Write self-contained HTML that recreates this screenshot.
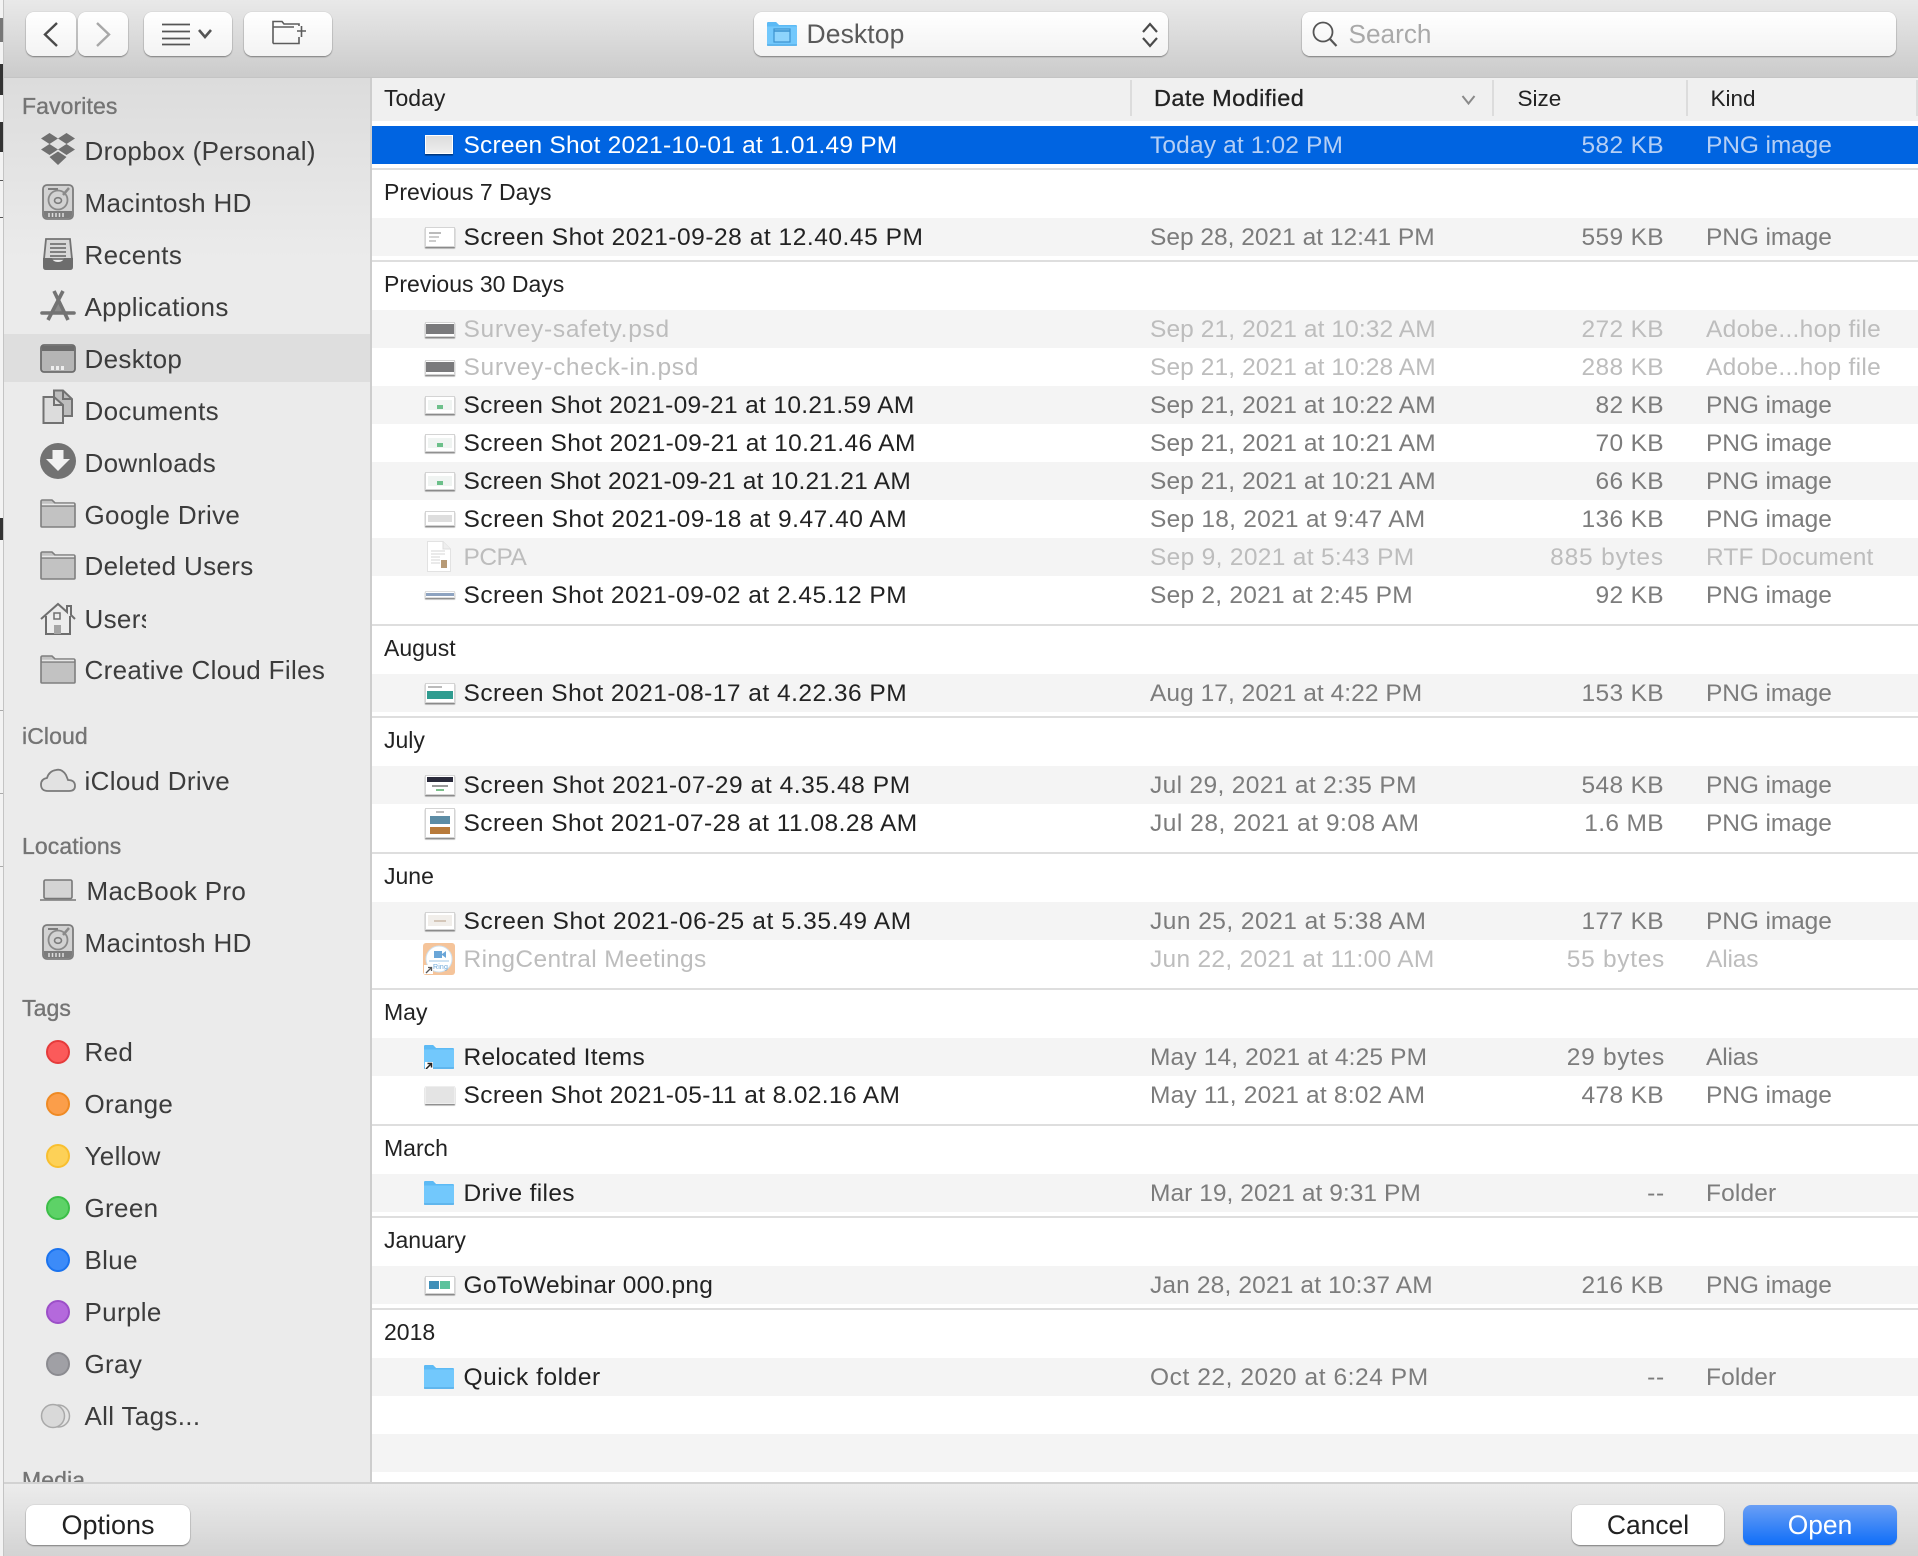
<!DOCTYPE html>
<html><head><meta charset="utf-8"><style>
html,body{margin:0;padding:0}
body{width:1918px;height:1556px;position:relative;overflow:hidden;background:#fff;font-family:"Liberation Sans",sans-serif;color:#222}
.a{position:absolute}
#top{left:0;top:0;width:1918px;height:77px;background:linear-gradient(#e9e9e9,#cbcbcb)}
#side{left:4px;top:78px;width:366px;height:1404px;background:linear-gradient(#dcdcdc,#ebebeb 180px);overflow:hidden}
#sdiv{left:370px;top:78px;width:2px;height:1404px;background:#cdcdcd}
#bot{left:4px;top:1484px;width:1914px;height:72px;background:linear-gradient(#ececec,#d3d3d3)}
#botl{left:4px;top:1482px;width:1914px;height:2px;background:#d2d2d2}
#hdr{left:372px;top:78px;width:1546px;height:43px;background:#f0f0f0;border-bottom:2px solid #d4d4d4}
.sep{position:absolute;top:80px;width:2px;height:36px;background:#dcdcdc}
.btn{position:absolute;background:linear-gradient(#fff,#f3f3f3);border-radius:8px;box-shadow:0 1px 1.5px rgba(0,0,0,.4),0 0 1px rgba(0,0,0,.2)}
.bb{position:absolute;background:#fff;border-radius:8px;box-shadow:0 1px 1.5px rgba(0,0,0,.4),0 0 1px rgba(0,0,0,.25);font-size:26.4px;line-height:40px;text-align:center;color:#222}
.si{position:absolute;left:80.5px;font-size:26px;letter-spacing:.33px;line-height:40px;height:40px;color:#3c3c3c;white-space:nowrap}
.st{position:absolute;left:18px;font-size:23px;letter-spacing:.1px;line-height:30px;color:#747474;-webkit-text-stroke:.35px #747474;white-space:nowrap}
.ic{position:absolute;overflow:visible}
.tag{position:absolute;left:42px;width:20px;height:20px;border-radius:50%;border-width:2px;border-style:solid}
.r{position:absolute;left:372px;width:1546px;height:38px;font-size:24.5px;letter-spacing:.15px;line-height:38px;white-space:nowrap}
.z{background:#f4f4f4}
.r span{position:absolute;top:1px}
.n{left:91.5px;color:#222}
.d{left:778px;color:#7c7c7c}
.s{right:254px;color:#7c7c7c;letter-spacing:.35px}
.k{left:1334px;color:#7c7c7c;letter-spacing:-.1px}
.off .n,.off .d,.off .s,.off .k{color:#bdbdbd}
.sel{background:#0064e1}
.sel .n{color:#fff}
.sel .d,.sel .s,.sel .k{color:#b5cff5}
.g{position:absolute;left:384px;font-size:23px;line-height:30px;color:#222;white-space:nowrap}
.l{position:absolute;left:372px;width:1546px;height:2px;background:#dedede}
.t{position:absolute;left:52.5px;width:28px;background:#fff;border:1px solid #d4d4d4;box-shadow:0 1.5px 1px rgba(0,0,0,.45);box-sizing:content-box;overflow:hidden}
.t i{position:absolute;display:block}
.f{position:absolute;left:52px}
</style></head><body>
<svg width="0" height="0" style="position:absolute"><defs>
<symbol id="gf" viewBox="0 0 36 29"><path d="M1 27V2.5Q1 1 2.5 1H12L15 4H33.5Q35 4 35 5.5V27Q35 28 34 28H2Q1 28 1 27Z" fill="#c2c2c2" stroke="#7f7f7f" stroke-width="1.6"/><path d="M1.5 7H34.5" stroke="#7f7f7f" stroke-width="1.6"/><path d="M2 5.500H34" stroke="#e8e8e8" stroke-width="1.5"/></symbol>
<symbol id="bf" viewBox="0 0 30 24"><path d="M0 22.500V1.500Q0 0 1.500 0H9L12 3H28.500Q30 3 30 4.500V22.500Q30 24 28.500 24H1.500Q0 24 0 22.500Z" fill="#72c8fc"/><path d="M0 4.500V1.500Q0 0 1.500 0H9L12 3H28.500Q30 3 30 4.500Z" fill="#5cbaf5"/><path d="M0 23H30" stroke="#5ab0e8" stroke-width="1.500"/></symbol>
<symbol id="hd" viewBox="0 0 32 36"><rect x="1" y="1" width="30" height="34" rx="4" fill="#d2d2d2" stroke="#7c7c7c" stroke-width="1.800"/><path d="M2 27H30V31Q30 34 27 34H5Q2 34 2 31Z" fill="#7c7c7c"/><path d="M7 29V33M10.500 29V33M14 29V33M17.500 29V33M21 29V33" stroke="#ddd" stroke-width="1.500"/><path d="M6 5H16" stroke="#7c7c7c" stroke-width="2"/><circle cx="16" cy="16" r="9.500" fill="none" stroke="#8a8a8a" stroke-width="1.800"/><ellipse cx="16" cy="16.500" rx="3.500" ry="2.800" fill="none" stroke="#7c7c7c" stroke-width="1.600"/><path d="M21 11L27 4" stroke="#8a8a8a" stroke-width="2.500"/></symbol>
</defs></svg>

<!-- background window sliver -->
<div class="a" style="left:0;top:0;width:4px;height:1556px;background:#f3f3f3"></div>
<div class="a" style="left:0;top:18px;width:3px;height:24px;background:#777"></div>
<div class="a" style="left:0;top:64px;width:3px;height:31px;background:#333"></div>
<div class="a" style="left:0;top:122px;width:3px;height:30px;background:#333"></div>
<div class="a" style="left:0;top:180px;width:3px;height:1px;background:#555"></div>
<div class="a" style="left:0;top:217px;width:3px;height:1px;background:#555"></div>
<div class="a" style="left:0;top:518px;width:3px;height:22px;background:#333"></div>
<div class="a" style="left:0;top:710px;width:3px;height:1px;background:#aaa"></div>
<div class="a" style="left:0;top:793px;width:3px;height:1px;background:#aaa"></div>
<div class="a" style="left:0;top:866px;width:3px;height:1px;background:#aaa"></div>
<div class="a" style="left:3px;top:0;width:1px;height:1556px;background:#c4c4c4"></div>

<div id="top" class="a" style="left:4px;width:1914px"></div>
<div class="a" style="left:4px;top:77px;width:1914px;height:1px;background:#c4c4c4"></div>

<div class="btn" style="left:26px;top:12px;width:50px;height:44px"></div>
<div class="btn" style="left:78px;top:12px;width:50px;height:44px"></div>
<div class="btn" style="left:144px;top:12px;width:88px;height:44px"></div>
<div class="btn" style="left:244px;top:12px;width:88px;height:44px"></div>
<svg class="ic" style="left:26px;top:12px" width="50" height="44"><path d="M31 11L19 22.500L31 34" fill="none" stroke="#4a4a4a" stroke-width="2.400"/></svg>
<svg class="ic" style="left:78px;top:12px" width="50" height="44"><path d="M19 11L31 22.500L19 34" fill="none" stroke="#a8a8a8" stroke-width="2.400"/></svg>
<svg class="ic" style="left:144px;top:12px" width="88" height="44"><path d="M18 12.500H46M18 19.500H46M18 26.500H46M18 32.500H46" stroke="#555" stroke-width="1.800"/><path d="M55 18L61 25L67 18" fill="none" stroke="#555" stroke-width="2.600"/></svg>
<svg class="ic" style="left:244px;top:12px" width="88" height="44"><path d="M29 31.500H55V25M29 31.500V9.500H38L40 12H55V14M29 15H50" fill="none" stroke="#5c5c5c" stroke-width="1.600"/><path d="M53 19H62M57.500 14V25" stroke="#5c5c5c" stroke-width="1.600"/></svg>

<div class="btn" style="left:754px;top:12px;width:414px;height:44px"></div>
<svg class="ic" style="left:767px;top:22px" width="30" height="24" viewBox="0 0 30 24"><use href="#bf"/><rect x="7" y="7" width="16" height="13" fill="#8ed4fc" stroke="#3c93cf" stroke-width="1.200"/><path d="M7 9H23" stroke="#3c93cf" stroke-width="1.500"/></svg>
<div class="a" style="left:806.500px;top:12px;font-size:26.500px;line-height:44px;letter-spacing:.1px;color:#5a5a5a">Desktop</div>
<svg class="ic" style="left:1140px;top:20px" width="20" height="30"><path d="M3 12L10 4L17 12M3 18L10 26L17 18" fill="none" stroke="#4a4a4a" stroke-width="2.200"/></svg>

<div class="btn" style="left:1302px;top:12px;width:594px;height:44px"></div>
<svg class="ic" style="left:1311px;top:20px" width="28" height="30"><circle cx="12" cy="12" r="9.500" fill="none" stroke="#555" stroke-width="1.800"/><path d="M19 19L25.500 26" stroke="#555" stroke-width="2.200"/></svg>
<div class="a" style="left:1348.500px;top:12px;font-size:26.200px;line-height:44px;color:#a9a9a9">Search</div>

<!-- sidebar -->
<div id="side" class="a">
<div class="a" style="left:0;top:256px;width:366px;height:48px;background:#dedede"></div>
<div class="st" style="top:13px">Favorites</div>
<svg class="ic" style="left:36px;top:54px" width="36" height="34" viewBox="0 0 36 34"><path d="M9.500 1L18 6.500L9.500 12L1 6.500ZM26.500 1L35 6.500L26.500 12L18 6.500ZM9.500 12L18 17.500L9.500 23L1 17.500ZM26.500 12L35 17.500L26.500 23L18 17.500ZM18 19.500L26.500 25L18 33L9.500 25Z" fill="#6f6f6f"/></svg>
<div class="si" style="top:52.500px">Dropbox (Personal)</div>
<svg class="ic" style="left:38px;top:106px" width="32" height="36"><use href="#hd"/></svg>
<div class="si" style="top:105px">Macintosh HD</div>
<svg class="ic" style="left:38px;top:159px" width="32" height="34" viewBox="0 0 32 34"><path d="M4 2H28L30 22H2Z" fill="#d8d8d8" stroke="#737373" stroke-width="1.800"/><path d="M8 7H24M8 11H24M8 15H24M8 19H24" stroke="#737373" stroke-width="1.800"/><path d="M1 21H10Q11 25 16 25Q21 25 22 21H31V30Q31 33 28 33H4Q1 33 1 30Z" fill="#6d6d6d"/></svg>
<div class="si" style="top:156.500px">Recents</div>
<svg class="ic" style="left:36px;top:212px" width="36" height="33" viewBox="0 0 36 33"><path d="M18.500 10L11 23H26Z" fill="#8a8a8a"/><path d="M14 1L28 30M23 1L8 30" stroke="#737373" stroke-width="3.600" fill="none"/><path d="M2 23H34" stroke="#737373" stroke-width="3.600" stroke-linecap="round"/></svg>
<div class="si" style="top:209px">Applications</div>
<svg class="ic" style="left:36px;top:266px" width="36" height="29" viewBox="0 0 36 29"><rect x="1" y="1" width="34" height="27" rx="3" fill="#b5b5b5" stroke="#6c6c6c" stroke-width="1.800"/><path d="M2 3Q2 2 3 2H33Q34 2 34 3V7H2Z" fill="#6c6c6c"/><path d="M11 22H14V26H11ZM16 22H19V26H16ZM21 22H24V26H21Z" fill="#eee"/></svg>
<div class="si" style="top:260.500px">Desktop</div>
<svg class="ic" style="left:38px;top:311px" width="32" height="36" viewBox="0 0 32 36"><path d="M12 1.500H21L30 10V27H12Z" fill="#bdbdbd" stroke="#727272" stroke-width="2"/><path d="M21 1.500V10H30" fill="none" stroke="#727272" stroke-width="2"/><path d="M1.500 8H12L21 16V34H1.500Z" fill="#dcdcdc" stroke="#727272" stroke-width="2"/><path d="M12 8V16H21" fill="none" stroke="#727272" stroke-width="2"/></svg>
<div class="si" style="top:313px">Documents</div>
<svg class="ic" style="left:36px;top:365px" width="36" height="36" viewBox="0 0 36 36"><circle cx="18" cy="18" r="18" fill="#727272"/><path d="M12.500 7H23.500V16H30L18 28L6 16H12.500Z" fill="#f2f2f2"/></svg>
<div class="si" style="top:364.500px">Downloads</div>
<svg class="ic" style="left:36px;top:421px" width="36" height="29"><use href="#gf"/></svg>
<div class="si" style="top:417px">Google Drive</div>
<svg class="ic" style="left:36px;top:473px" width="36" height="29"><use href="#gf"/></svg>
<div class="si" style="top:468px">Deleted Users</div>
<svg class="ic" style="left:36px;top:524px" width="36" height="33" viewBox="0 0 36 33"><path d="M1 17L18 2L27 10V4H31V13L35 17" fill="none" stroke="#6e6e6e" stroke-width="2"/><path d="M6 14V32H30V14" fill="#ededed" stroke="#6e6e6e" stroke-width="2"/><rect x="14" y="11" width="6" height="6" fill="none" stroke="#6e6e6e" stroke-width="1.500"/><rect x="14" y="23" width="7" height="9" fill="#a5a5a5"/></svg>
<div class="si" style="top:521px;width:61px;overflow:hidden">Users</div>
<svg class="ic" style="left:36px;top:577px" width="36" height="29"><use href="#gf"/></svg>
<div class="si" style="top:572px">Creative Cloud Files</div>
<div class="st" style="top:643px">iCloud</div>
<svg class="ic" style="left:36px;top:689px" width="36" height="25" viewBox="0 0 36 25"><path d="M8 24Q1 24 1 17.500Q1 12 7 11Q9 4 16 3Q22 1.500 26 8Q28 13 28 13Q35 13 35 19Q35 24 29 24Z" fill="#e2e2e2" stroke="#7a7a7a" stroke-width="1.800"/></svg>
<div class="si" style="top:683px">iCloud Drive</div>
<div class="st" style="top:753px">Locations</div>
<svg class="ic" style="left:36px;top:801px" width="36" height="22" viewBox="0 0 36 22"><rect x="4" y="1" width="28" height="18.500" rx="1.500" fill="#d4d4d4" stroke="#777" stroke-width="1.600"/><path d="M0 21H36" stroke="#777" stroke-width="1.600"/></svg>
<div class="si" style="top:793px;left:82.500px">MacBook Pro</div>
<svg class="ic" style="left:38px;top:846px" width="32" height="36"><use href="#hd"/></svg>
<div class="si" style="top:845px">Macintosh HD</div>
<div class="st" style="top:915px">Tags</div>
<div class="tag" style="top:962px;background:#fb5a5a;border-color:#e53b3b"></div><div class="si" style="top:954px">Red</div>
<div class="tag" style="top:1014px;background:#fb9e4a;border-color:#ef8a24"></div><div class="si" style="top:1006px">Orange</div>
<div class="tag" style="top:1066px;background:#fdd157;border-color:#f8bf2f"></div><div class="si" style="top:1058px">Yellow</div>
<div class="tag" style="top:1118px;background:#5dd267;border-color:#3cbe48"></div><div class="si" style="top:1110px">Green</div>
<div class="tag" style="top:1170px;background:#3c8bf8;border-color:#1b73ee"></div><div class="si" style="top:1162px">Blue</div>
<div class="tag" style="top:1222px;background:#b469dc;border-color:#9c4fc8"></div><div class="si" style="top:1214px">Purple</div>
<div class="tag" style="top:1274px;background:#a0a0a5;border-color:#8b8b90"></div><div class="si" style="top:1266px">Gray</div>
<svg class="ic" style="left:36px;top:1325px" width="32" height="26" viewBox="0 0 32 26"><circle cx="18.500" cy="13" r="11" fill="#e4e4e4" stroke="#a9a9a9" stroke-width="1.500"/><circle cx="13" cy="13" r="11.500" fill="#d9d9d9" stroke="#a9a9a9" stroke-width="1.500"/></svg>
<div class="si" style="top:1318px">All Tags...</div>
<div class="st" style="top:1387px">Media</div>
</div>
<div id="sdiv" class="a"></div>

<!-- table header -->
<div id="hdr" class="a"></div>
<div class="sep" style="left:1130px"></div><div class="sep" style="left:1492px"></div><div class="sep" style="left:1686px"></div><div class="sep" style="left:1916px"></div>
<div class="g" style="top:83px;color:#222">Today</div>
<div class="a" style="left:1154px;top:83px;font-size:23.500px;line-height:30px;letter-spacing:.4px;-webkit-text-stroke:.3px #222;white-space:nowrap">Date Modified</div>
<svg class="ic" style="left:1461px;top:94px" width="16" height="12"><path d="M1.500 2L7.500 9.500L13.500 2" fill="none" stroke="#8a8a8a" stroke-width="2"/></svg>
<div class="a" style="left:1517.500px;top:83.500px;font-size:22.500px;line-height:30px;white-space:nowrap">Size</div>
<div class="a" style="left:1710.500px;top:83.500px;font-size:22.500px;line-height:30px;white-space:nowrap">Kind</div>

<div class="l" style="top:121px;height:5px;background:#fff"></div>
<div class="r sel" style="top:126px"><div class="t" style="top:9px;height:17px;background:linear-gradient(#dcdcdc,#eee);border-color:#fff;border-width:1.500px;width:26px"></div><span class="n" style="letter-spacing:.21px">Screen Shot 2021-10-01 at 1.01.49 PM</span><span class="d">Today at 1:02 PM</span><span class="s">582 KB</span><span class="k">PNG image</span></div>
<div class="l" style="top:168px"></div>

<div class="g" style="top:177px">Previous 7 Days</div>
<div class="r z" style="top:218px"><div class="t" style="top:9px;height:18px"><i style="left:3px;top:4px;width:12px;height:2px;background:#bbb"></i><i style="left:3px;top:8px;width:10px;height:2px;background:#ccc"></i><i style="left:3px;top:12px;width:7px;height:2px;background:#ccc"></i></div><span class="n" style="letter-spacing:.54px">Screen Shot 2021-09-28 at 12.40.45 PM</span><span class="d" style="letter-spacing:0">Sep 28, 2021 at 12:41 PM</span><span class="s">559 KB</span><span class="k">PNG image</span></div>
<div class="l" style="top:260px"></div>

<div class="g" style="top:269px">Previous 30 Days</div>
<div class="r z off" style="top:310px"><div class="t" style="top:12px;height:13px"><i style="left:0;top:1px;width:28px;height:10px;background:#7a7a7c"></i></div><span class="n" style="letter-spacing:.71px">Survey-safety.psd</span><span class="d" style="letter-spacing:.1px">Sep 21, 2021 at 10:32 AM</span><span class="s">272 KB</span><span class="k" style="letter-spacing:.3px">Adobe...hop file</span></div>
<div class="r off" style="top:348px"><div class="t" style="top:12px;height:13px"><i style="left:0;top:1px;width:28px;height:10px;background:#7a7a7c"></i></div><span class="n" style="letter-spacing:.72px">Survey-check-in.psd</span><span class="d" style="letter-spacing:.1px">Sep 21, 2021 at 10:28 AM</span><span class="s">288 KB</span><span class="k" style="letter-spacing:.3px">Adobe...hop file</span></div>
<div class="r z" style="top:386px"><div class="t" style="top:10px;height:16px"><i style="left:2px;top:3px;width:24px;height:10px;background:#f0f4f2"></i><i style="left:11px;top:8px;width:6px;height:4px;background:#6cc08a"></i></div><span class="n" style="letter-spacing:.34px">Screen Shot 2021-09-21 at 10.21.59 AM</span><span class="d" style="letter-spacing:.1px">Sep 21, 2021 at 10:22 AM</span><span class="s">82 KB</span><span class="k">PNG image</span></div>
<div class="r" style="top:424px"><div class="t" style="top:10px;height:16px"><i style="left:2px;top:3px;width:24px;height:10px;background:#f0f4f2"></i><i style="left:11px;top:8px;width:6px;height:4px;background:#6cc08a"></i></div><span class="n" style="letter-spacing:.37px">Screen Shot 2021-09-21 at 10.21.46 AM</span><span class="d" style="letter-spacing:.1px">Sep 21, 2021 at 10:21 AM</span><span class="s">70 KB</span><span class="k">PNG image</span></div>
<div class="r z" style="top:462px"><div class="t" style="top:10px;height:16px"><i style="left:2px;top:3px;width:24px;height:10px;background:#f0f4f2"></i><i style="left:11px;top:8px;width:6px;height:4px;background:#6cc08a"></i></div><span class="n" style="letter-spacing:.24px">Screen Shot 2021-09-21 at 10.21.21 AM</span><span class="d" style="letter-spacing:.1px">Sep 21, 2021 at 10:21 AM</span><span class="s">66 KB</span><span class="k">PNG image</span></div>
<div class="r" style="top:500px"><div class="t" style="top:11px;height:13px"><i style="left:2px;top:3px;width:24px;height:7px;background:#dedede"></i></div><span class="n" style="letter-spacing:.52px">Screen Shot 2021-09-18 at 9.47.40 AM</span><span class="d" style="letter-spacing:.25px">Sep 18, 2021 at 9:47 AM</span><span class="s">136 KB</span><span class="k">PNG image</span></div>
<div class="r z off" style="top:538px"><svg class="ic" style="left:55px;top:3px" width="24" height="31" viewBox="0 0 24 31"><path d="M0.500 0.500H16L23.500 8V30.500H0.500Z" fill="#fff" stroke="#e2e2e2"/><path d="M16 0.500V8H23.500" fill="#eee" stroke="#ddd"/><path d="M4 10H18M4 13H18M4 16H13M4 19H13M4 22H13" stroke="#dedede" stroke-width="1.200"/><rect x="14" y="19" width="6" height="8" fill="#b79a76"/></svg><span class="n" style="letter-spacing:-.5px">PCPA</span><span class="d" style="letter-spacing:.32px">Sep 9, 2021 at 5:43 PM</span><span class="s" style="letter-spacing:.85px">885 bytes</span><span class="k" style="letter-spacing:.15px">RTF Document</span></div>
<div class="r" style="top:576px"><div class="t" style="top:15px;height:5px;border-color:#ddd"><i style="left:0;top:1px;width:28px;height:3px;background:#8ea3c0"></i></div><span class="n" style="letter-spacing:.48px">Screen Shot 2021-09-02 at 2.45.12 PM</span><span class="d" style="letter-spacing:.25px">Sep 2, 2021 at 2:45 PM</span><span class="s">92 KB</span><span class="k">PNG image</span></div>
<div class="l" style="top:624px"></div>

<div class="g" style="top:633px">August</div>
<div class="r z" style="top:674px"><div class="t" style="top:9px;height:18px"><i style="left:1px;top:7px;width:26px;height:8px;background:#2f9c90"></i><i style="left:2px;top:2px;width:14px;height:2px;background:#bbb"></i></div><span class="n" style="letter-spacing:.48px">Screen Shot 2021-08-17 at 4.22.36 PM</span><span class="d" style="letter-spacing:.05px">Aug 17, 2021 at 4:22 PM</span><span class="s">153 KB</span><span class="k">PNG image</span></div>
<div class="l" style="top:716px"></div>

<div class="g" style="top:725px">July</div>
<div class="r z" style="top:766px"><div class="t" style="top:9px;height:18px"><i style="left:1px;top:1px;width:26px;height:5px;background:#2a2a3a"></i><i style="left:6px;top:9px;width:16px;height:2px;background:#999"></i><i style="left:10px;top:13px;width:8px;height:2px;background:#7bbf8a"></i></div><span class="n" style="letter-spacing:.58px">Screen Shot 2021-07-29 at 4.35.48 PM</span><span class="d" style="letter-spacing:.35px">Jul 29, 2021 at 2:35 PM</span><span class="s">548 KB</span><span class="k">PNG image</span></div>
<div class="r" style="top:804px"><div class="t" style="top:4px;height:28px"><i style="left:4px;top:7px;width:20px;height:8px;background:#5c8ca5"></i><i style="left:4px;top:18px;width:20px;height:7px;background:#b87a3a"></i><i style="left:10px;top:2px;width:8px;height:2px;background:#bbb"></i></div><span class="n" style="letter-spacing:.47px">Screen Shot 2021-07-28 at 11.08.28 AM</span><span class="d" style="letter-spacing:.52px">Jul 28, 2021 at 9:08 AM</span><span class="s">1.6 MB</span><span class="k">PNG image</span></div>
<div class="l" style="top:852px"></div>

<div class="g" style="top:861px">June</div>
<div class="r z" style="top:902px"><div class="t" style="top:10px;height:16px"><i style="left:2px;top:2px;width:24px;height:11px;background:#f1eeea"></i><i style="left:8px;top:7px;width:12px;height:2px;background:#d4c6b8"></i></div><span class="n" style="letter-spacing:.65px">Screen Shot 2021-06-25 at 5.35.49 AM</span><span class="d" style="letter-spacing:.47px">Jun 25, 2021 at 5:38 AM</span><span class="s">177 KB</span><span class="k">PNG image</span></div>
<div class="r off" style="top:940px"><svg class="ic" style="left:51px;top:3px" width="32" height="32" viewBox="0 0 32 32"><rect width="32" height="32" rx="3" fill="#f5c49a"/><circle cx="16" cy="16" r="13" fill="#fff" stroke="#cfe1ef"/><rect x="11" y="8" width="8" height="7" fill="#6aa6d8"/><path d="M19 11L23 8V15L19 12Z" fill="#6aa6d8"/><path d="M6 18H26" stroke="#9cc4e4"/><text x="10" y="26" font-size="7" fill="#6aa6d8" font-family="Liberation Sans">Ring</text><rect x="1" y="22" width="9" height="9" fill="#fff"/><path d="M3 30L8 25M5 24.500H8.500V28" fill="none" stroke="#555" stroke-width="1.300"/></svg><span class="n" style="letter-spacing:.38px">RingCentral Meetings</span><span class="d" style="letter-spacing:.3px">Jun 22, 2021 at 11:00 AM</span><span class="s" style="right:253px;letter-spacing:.7px">55 bytes</span><span class="k" style="letter-spacing:-.15px">Alias</span></div>
<div class="l" style="top:988px"></div>

<div class="g" style="top:997px">May</div>
<div class="r z" style="top:1038px"><svg class="f" style="top:7px" width="30" height="24"><use href="#bf"/><rect x="1" y="17" width="8" height="8" fill="#fff"/><path d="M2 24L7 19M3.500 18.500H7.500V22.500" fill="none" stroke="#222" stroke-width="1.500"/></svg><span class="n" style="letter-spacing:.3px">Relocated Items</span><span class="d">May 14, 2021 at 4:25 PM</span><span class="s" style="right:253px;letter-spacing:.7px">29 bytes</span><span class="k" style="letter-spacing:-.15px">Alias</span></div>
<div class="r" style="top:1076px"><div class="t" style="top:10px;height:16px;background:#e4e4e4;border-color:#eee"></div><span class="n" style="letter-spacing:.38px">Screen Shot 2021-05-11 at 8.02.16 AM</span><span class="d" style="letter-spacing:.2px">May 11, 2021 at 8:02 AM</span><span class="s">478 KB</span><span class="k">PNG image</span></div>
<div class="l" style="top:1124px"></div>

<div class="g" style="top:1133px">March</div>
<div class="r z" style="top:1174px"><svg class="f" style="top:7px" width="30" height="24"><use href="#bf"/></svg><span class="n" style="letter-spacing:.35px">Drive files</span><span class="d" style="letter-spacing:.05px">Mar 19, 2021 at 9:31 PM</span><span class="s" style="right:253px;letter-spacing:.8px">--</span><span class="k" style="letter-spacing:.15px">Folder</span></div>
<div class="l" style="top:1216px"></div>

<div class="g" style="top:1225px">January</div>
<div class="r z" style="top:1266px"><div class="t" style="top:10px;height:16px"><i style="left:3px;top:4px;width:10px;height:8px;background:#3f8fb8"></i><i style="left:14px;top:4px;width:10px;height:8px;background:#5cc29c"></i></div><span class="n" style="letter-spacing:.26px">GoToWebinar 000.png</span><span class="d">Jan 28, 2021 at 10:37 AM</span><span class="s">216 KB</span><span class="k">PNG image</span></div>
<div class="l" style="top:1308px"></div>

<div class="g" style="top:1317px">2018</div>
<div class="r z" style="top:1358px"><svg class="f" style="top:7px" width="30" height="24"><use href="#bf"/></svg><span class="n" style="letter-spacing:.54px">Quick folder</span><span class="d" style="letter-spacing:.57px">Oct 22, 2020 at 6:24 PM</span><span class="s" style="right:253px;letter-spacing:.8px">--</span><span class="k" style="letter-spacing:.15px">Folder</span></div>
<div class="r z" style="top:1434px"></div>

<!-- bottom bar -->
<div id="botl" class="a"></div>
<div id="bot" class="a"></div>
<div class="bb" style="left:26px;top:1505px;width:164px;height:40px;font-size:27px">Options</div>
<div class="bb" style="left:1572px;top:1505px;width:152px;height:40px">Cancel</div>
<div class="bb" style="left:1743px;top:1505px;width:154px;height:40px;background:linear-gradient(#6a9ff5,#0f6ef8);color:#fff;box-shadow:0 1px 1px rgba(0,0,0,.2)">Open</div>
</body></html>
